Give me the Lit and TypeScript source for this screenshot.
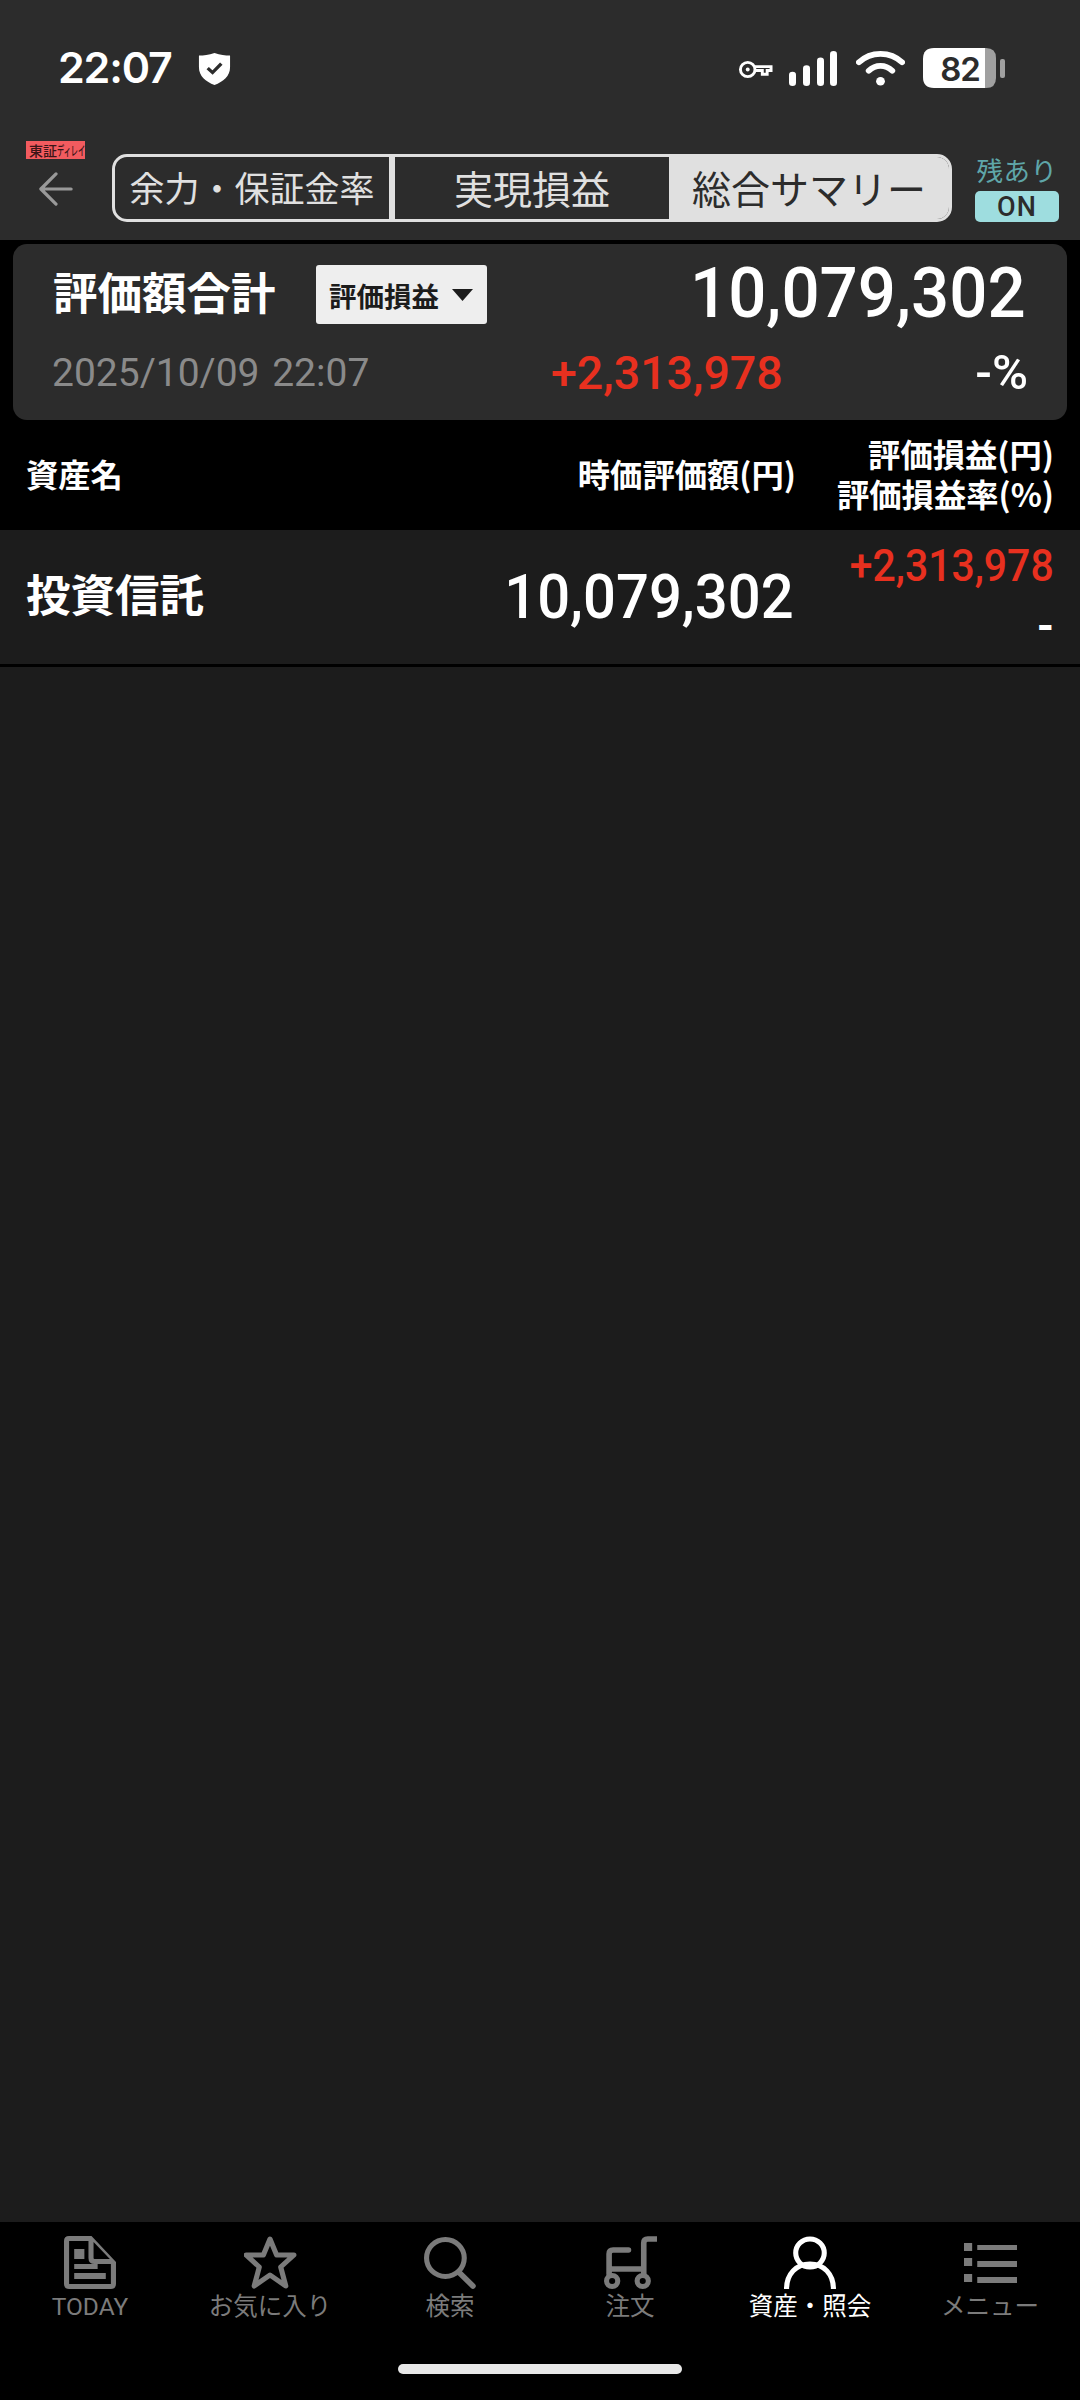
import { LitElement, html, css, svg } from "lit";
import { customElement } from "lit/decorators.js";

const tabs = [
  { label: "TODAY", active: false, icon: svg`<path fill-rule="evenodd" fill="currentColor" d="M5 0H27L51 26V48Q51 53 46 53H5Q0 53 0 48V5Q0 0 5 0ZM5 5V48H46V28H30Q24 28 24 22V5ZM29 6V22Q29 23 30 23H45Z"/><rect x="10" y="13" width="10" height="10" fill="currentColor"/><rect x="10" y="28" width="23" height="5" fill="currentColor"/><rect x="10" y="37" width="31" height="6" fill="currentColor"/>` },
  { label: "お気に入り", active: false, icon: svg`<path fill="none" stroke="currentColor" stroke-width="5" stroke-linejoin="round" d="M25.5 3L32 19H49L36 31L41 50L25.5 39L10 50L15 31L2 19H19Z"/>` },
  { label: "検索", active: false, icon: svg`<circle cx="21" cy="22" r="18.5" fill="none" stroke="currentColor" stroke-width="5"/><path d="M34 36L48 50" fill="none" stroke="currentColor" stroke-width="5.5" stroke-linecap="round"/>` },
  { label: "注文", active: false, icon: svg`<path fill="none" stroke="currentColor" stroke-width="5.5" stroke-linecap="round" d="M51 3H43Q39 3 39 7V38M24 14H9Q5 14 5 18V38M5 33H39"/><circle cx="8" cy="45" r="5.5" fill="none" stroke="currentColor" stroke-width="5"/><circle cx="38" cy="45" r="5.5" fill="none" stroke="currentColor" stroke-width="5"/>` },
  { label: "資産・照会", active: true, icon: svg`<circle cx="25.5" cy="17" r="14" fill="none" stroke="currentColor" stroke-width="5"/><path d="M2.5 53C2.5 38 12 28 25.5 28S48.5 38 48.5 53" fill="none" stroke="currentColor" stroke-width="5"/>` },
  { label: "メニュー", active: false, icon: svg`<g fill="currentColor"><rect x="0" y="7" width="8" height="8"/><rect x="13" y="9" width="39" height="5"/><rect x="0" y="22" width="8" height="8"/><rect x="13" y="25" width="39" height="6"/><rect x="0" y="38" width="8" height="8"/><rect x="13" y="41" width="39" height="6"/></g>` },
];

@customElement("app-root")
export class AppRoot extends LitElement {
  static styles = css`
    :host {
      display: flex;
      flex-direction: column;
      width: 1080px;
      height: 2400px;
      overflow: hidden;
      background: #1c1c1c;
      font-family: Roboto, "Noto Sans CJK JP", sans-serif;
      color: #fff;
    }
    .header { background: #2c2c2c; height: 240px; flex: none; display: flex; flex-direction: column; }
    .status { height: 141px; flex: none; display: flex; align-items: flex-start; padding: 45px 75px 0 58px; box-sizing: border-box; }
    .time { font: 600 43px/44px Inter, Roboto, sans-serif; letter-spacing: -1.2px; width: 139px; height: 44px; flex: none; }
    .shield { width: 35px; height: 34px; margin-top: 7px; }
    .spacer { flex: 1; }
    .key { width: 35px; height: 19px; margin: 15px 15px 0 0; }
    .signal { width: 50px; height: 36px; margin: 5px 18px 0 0; }
    .wifi { width: 49px; height: 36px; margin: 5px 18px 0 0; }
    .battery { width: 82px; height: 40px; margin-top: 3px; }
    .nav { flex: none; display: flex; padding-left: 26px; height: 99px; align-items: flex-start; }
    .left { width: 86px; flex: none; display: flex; flex-direction: column; }
    .delay {
      width: 59px; height: 18px; background: #f25b5f; color: #3a1517; display: flex; align-items: center; padding-left: 3px; box-sizing: border-box;
      font: 500 14px/18px "Noto Sans CJK JP", sans-serif; white-space: nowrap; overflow: hidden;
    }
    .kana { display: inline-block; font-size: 13px; width: 28px; transform: scaleX(0.55); transform-origin: left center; }
    .back { width: 34px; height: 34px; margin: 13px 0 0 13px; }
    .seg {
      width: 840px; height: 68px; box-sizing: border-box; margin-top: 13px; flex: none;
      display: flex; border: 3px solid #e0e0e0; border-radius: 15px; overflow: hidden;
      font-family: "Noto Sans CJK JP", sans-serif; color: #e0e0e0;
    }
    .seg div { display: flex; align-items: center; justify-content: center; white-space: nowrap; box-sizing: border-box; padding-bottom: 3px; }
    .s1 { width: 280px; font-size: 35px; border-right: 6px solid #e0e0e0; }
    .s2 { width: 274px; font-size: 39px; }
    .s3 { flex: 1; font-size: 39px; background: #e0e0e0; color: #2c2c2c; }
    .rem { width: 84px; margin-left: 23px; margin-top: 13px; display: flex; flex-direction: column; align-items: center; flex: none; }
    .rem span { font: 400 26.5px/32px "Noto Sans CJK JP", sans-serif; color: #5fa6a9; white-space: nowrap; letter-spacing: 0.5px; }
    .on { margin-top: 5px; width: 84px; height: 31px; border-radius: 5px; background: #9edddf; color: #2c2c2c; font: 500 27px/33px Roboto, sans-serif; text-align: center; letter-spacing: 1px; }

    .top { background: #000; flex: none; padding: 4px 13px 0 13px; height: 290px; box-sizing: border-box; display: flex; flex-direction: column; }
    .card { height: 176px; flex: none; background: #2c2c2c; border-radius: 14px; display: flex; flex-direction: column; }
    .c1 { display: flex; align-items: center; height: 98px; flex: none; padding: 0 41px 0 40px; }
    .title { font: 700 44.5px/60px "Noto Sans CJK JP", sans-serif; width: 263px; flex: none; white-space: nowrap; margin-top: -5px; }
    .dd { width: 171px; height: 59px; flex: none; background: #eee; border-radius: 3px; color: #1c1c1c; display: flex; align-items: center; padding-left: 13px; box-sizing: border-box; font: 700 27.5px/56px "Noto Sans CJK JP", sans-serif; gap: 13px; white-space: nowrap; margin-top: 3px; }
    .tri { width: 21px; height: 12px; flex: none; }
    .big { margin-left: auto; font: 500 70px/80px Roboto, sans-serif; transform: scaleX(0.96); transform-origin: right center; white-space: nowrap; }
    .c2 { display: flex; align-items: center; height: 62px; flex: none; padding: 0 39px 0 39px; }
    .date { font: 400 39px/50px Roboto, sans-serif; word-spacing: 3px; color: #8a8a8a; width: 500px; flex: none; white-space: nowrap; }
    .gain { font: 500 47px/50px Roboto, sans-serif; color: #e8301f; transform: scaleX(0.99); transform-origin: left center; white-space: nowrap; margin-left: -1px; }
    .pct { margin-left: auto; font: 500 49px/50px Roboto, sans-serif; }
    .heads { flex: 1; display: flex; align-items: center; padding: 0 13px 4px 13px; font: 700 32.3px/40px "Noto Sans CJK JP", sans-serif; }
    .heads .h2 { margin-left: auto; text-align: right; white-space: nowrap; }
    .heads .h3 { width: 258px; flex: none; text-align: right; white-space: nowrap; }

    .row { height: 137px; box-sizing: border-box; flex: none; display: flex; align-items: center; padding: 0 26px; border-bottom: 3px solid #000; }
    .name { font: 700 44.5px/60px "Noto Sans CJK JP", sans-serif; white-space: nowrap; margin-top: -8px; }
    .val { margin-left: auto; font: 500 61px/70px Roboto, sans-serif; transform: scaleX(0.95); transform-origin: right center; white-space: nowrap; }
    .rc { width: 260px; flex: none; display: flex; flex-direction: column; align-items: flex-end; height: 108px; }
    .rg { font: 500 44.5px/46px Roboto, sans-serif; color: #e8301f; transform: scaleX(0.92); transform-origin: right center; white-space: nowrap; }
    .rd { font: 700 44px/46px Roboto, sans-serif; margin-top: 14px; }
    .fill { flex: 1; }

    .tabbar { background: #000; height: 178px; flex: none; display: flex; flex-direction: column; }
    .items { display: grid; grid-template-columns: repeat(6, 1fr); padding-top: 14px; }
    .item { display: flex; flex-direction: column; align-items: center; color: #7b7b7b; }
    .item.active { color: #fff; }
    .item svg { width: 53px; height: 53px; }
    .item span { font: 400 24.5px/34px Roboto, "Noto Sans CJK JP", sans-serif; margin-top: 1px; white-space: nowrap; }
    .home { width: 284px; height: 10px; border-radius: 5px; background: #e8e8e8; margin: 40px auto 0; }
  `;

  render() {
    return html`
      <div class="header">
        <div class="status">
          <div class="time">22:07</div>
          <svg class="shield" viewBox="0 0 36 38" preserveAspectRatio="none">
            <path fill="#fff" d="M18 1C24 3 29 4 34 4V17C34 27 27 33 18 37C9 33 2 27 2 17V4C7 4 12 3 18 1Z"/>
            <path fill="none" stroke="#2c2c2c" stroke-width="3.4" d="M11 18L16 23L25 13"/>
          </svg>
          <div class="spacer"></div>
          <svg class="key" viewBox="0 0 36 20" preserveAspectRatio="none">
            <circle cx="10" cy="10" r="7.5" fill="none" stroke="#fff" stroke-width="3"/>
            <circle cx="10" cy="10" r="2" fill="#fff"/>
            <path fill="none" stroke="#fff" stroke-width="3" d="M17 7H34V11H30V15H25V11H17"/>
          </svg>
          <svg class="signal" viewBox="0 0 50 38" preserveAspectRatio="none">
            <g fill="#fff">
              <rect x="1" y="23" width="7" height="15" rx="3.5"/>
              <rect x="15" y="16" width="7" height="22" rx="3.5"/>
              <rect x="29" y="8" width="7" height="30" rx="3.5"/>
              <rect x="42" y="1" width="7" height="37" rx="3.5"/>
            </g>
          </svg>
          <svg class="wifi" viewBox="0 0 50 38" preserveAspectRatio="none">
            <path fill="none" stroke="#fff" stroke-width="6" stroke-linecap="round" d="M3 13C15 1 35 1 47 13"/>
            <path fill="none" stroke="#fff" stroke-width="6" stroke-linecap="round" d="M13 22C20 15 30 15 37 22"/>
            <circle cx="25" cy="33" r="4.5" fill="#fff"/>
          </svg>
          <svg class="battery" viewBox="0 0 82 40">
            <path fill="#a0a0a0" d="M60 0H63Q73 0 73 10V30Q73 40 63 40H60Z"/>
            <path fill="#fff" d="M11 0H62V40H11Q0 40 0 29V11Q0 0 11 0Z"/>
            <rect x="77" y="11" width="5" height="19" rx="2" fill="#a0a0a0"/>
            <text x="37" y="33" text-anchor="middle" font-family="Inter, Roboto, sans-serif" font-weight="600" font-size="33" letter-spacing="-1" fill="#2c2c2c">82</text>
          </svg>
        </div>
        <div class="nav">
          <div class="left">
            <div class="delay">東証<span class="kana">ディレイ</span></div>
            <svg class="back" viewBox="0 0 36 36" preserveAspectRatio="none">
              <path fill="none" stroke="#999" stroke-width="3.4" stroke-linecap="round" stroke-linejoin="round" d="M34 18H3M18 2L2 18L18 34"/>
            </svg>
          </div>
          <div class="seg">
            <div class="s1">余力・保証金率</div>
            <div class="s2">実現損益</div>
            <div class="s3">総合サマリー</div>
          </div>
          <div class="rem">
            <span>残あり</span>
            <div class="on">ON</div>
          </div>
        </div>
      </div>

      <div class="top">
        <div class="card">
          <div class="c1">
            <div class="title">評価額合計</div>
            <div class="dd">評価損益<svg class="tri" viewBox="0 0 21 12"><path fill="#1c1c1c" d="M0 0H21L10.5 12Z"/></svg></div>
            <div class="big">10,079,302</div>
          </div>
          <div class="c2">
            <div class="date">2025/10/09 22:07</div>
            <div class="gain">+2,313,978</div>
            <div class="pct">-%</div>
          </div>
        </div>
        <div class="heads">
          <div>資産名</div>
          <div class="h2">時価評価額(円)</div>
          <div class="h3">評価損益(円)<br />評価損益率(%)</div>
        </div>
      </div>

      <div class="row">
        <div class="name">投資信託</div>
        <div class="val">10,079,302</div>
        <div class="rc">
          <div class="rg">+2,313,978</div>
          <div class="rd">-</div>
        </div>
      </div>
      <div class="fill"></div>

      <div class="tabbar">
        <div class="items">
          ${tabs.map(
            (t) => html`<div class="item ${t.active ? "active" : ""}">
              <svg viewBox="0 0 52 53" preserveAspectRatio="none">${t.icon}</svg>
              <span>${t.label}</span>
            </div>`
          )}
        </div>
        <div class="home"></div>
      </div>
    `;
  }
}
